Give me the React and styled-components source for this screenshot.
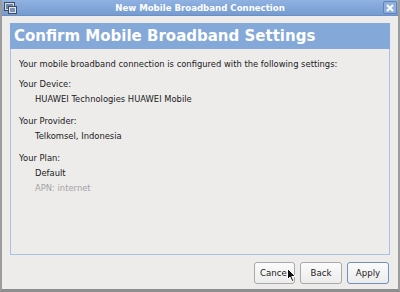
import React from 'react';
import styled, { createGlobalStyle } from 'styled-components';

const Global = createGlobalStyle`
  html, body {
    margin: 0;
    padding: 0;
    background: #edeceb;
  }
  * { box-sizing: border-box; }
`

const Window = styled.div`
  width: 400px;
  height: 292px;
  display: flex;
  flex-direction: column;
  background: #edeceb;
  border-left: 2px solid #9c9c9c;
  border-right: 2px solid #9c9c9c;
  border-bottom: 3px solid #8e8e8e;
  font-family: "DejaVu Sans", sans-serif;
  color: #1a1a1a;
  position: relative;
  overflow: hidden;
`
const TitleBar = styled.div`
  height: 16px;
  margin: 0 -2px;
  display: flex;
  align-items: center;
  padding: 0 3px 0 4px;
  background: linear-gradient(#90b2e2, #759bd0);
  border-bottom: 1px solid #6a8fc4;
`
const TitleText = styled.div`
  flex: 1;
  text-align: center;
  color: #fff;
  font-weight: bold;
  font-size: 8.6px;
`
const CloseBtn = styled.div`
  width: 14px;
  height: 13px;
  border: 1px solid #5f82b6;
  border-radius: 2px;
  background: #8fb0dc;
  display: flex;
  align-items: center;
  justify-content: center;
`
const Content = styled.div`
  flex: 1;
  display: flex;
  flex-direction: column;
  padding: 7px 8px 0 8px;
`
const Header = styled.div`
  height: 26px;
  background: #84a8d8;
  color: #fff;
  font-weight: bold;
  font-size: 15px;
  display: flex;
  align-items: center;
  padding-left: 4px;
`
const Body = styled.div`
  height: 206px;
  border: 1px solid #a9c1e2;
  border-top: none;
  padding: 8px 8px;
  font-size: 8.4px;
`
const Line = styled.div`
  height: 15px;
  line-height: 15px;
  padding-left: ${p => (p.$indent ? '16px' : '0')};
  color: ${p => (p.$muted ? '#a3a3a3' : '#1a1a1a')};
  margin-top: ${p => p.$gap || 0}px;
`
const Buttons = styled.div`
  display: flex;
  justify-content: flex-end;
  gap: 5px;
  padding: 7px 1px 0 0;
`
const Button = styled.div`
  width: ${p => p.$w}px;
  height: 22px;
  border: 1px solid ${p => (p.$default ? '#7391be' : '#a9a9a9')};
  border-radius: 3px;
  background: linear-gradient(#fbfbfb, #ececec);
  font-size: 8.6px;
  display: flex;
  align-items: center;
  justify-content: center;
  color: #1a1a1a;
`
const Cursor = styled.svg`
  position: absolute;
  left: 285px;
  top: 268px;
`

export default function App() {
  return (
    <>
      <Global />
      <Window>
        <TitleBar>
          <svg width="13" height="12" viewBox="0 0 13 12">
            <rect x="0.5" y="0.5" width="10" height="8" fill="#d8dde6" stroke="#3f4b5e" />
            <rect x="2" y="2" width="7" height="5" fill="#6f86a8" />
            <rect x="4.5" y="4.5" width="8" height="7" fill="#e0e4ea" stroke="#3f4b5e" />
            <rect x="6" y="6" width="5" height="4" fill="#7d93b4" />
          </svg>
          <TitleText>New Mobile Broadband Connection</TitleText>
          <CloseBtn>
            <svg width="8" height="8" viewBox="0 0 8 8">
              <path d="M1 1L7 7M7 1L1 7" stroke="#fff" strokeWidth="2" />
            </svg>
          </CloseBtn>
        </TitleBar>
        <Content>
          <Header>Confirm Mobile Broadband Settings</Header>
          <Body>
            <Line>Your mobile broadband connection is configured with the following settings:</Line>
            <Line $gap={5}>Your Device:</Line>
            <Line $indent>HUAWEI Technologies HUAWEI Mobile</Line>
            <Line $gap={7}>Your Provider:</Line>
            <Line $indent>Telkomsel, Indonesia</Line>
            <Line $gap={7}>Your Plan:</Line>
            <Line $indent>Default</Line>
            <Line $indent $muted>APN: internet</Line>
          </Body>
          <Buttons>
            <Button $w={41}>Cancel</Button>
            <Button $w={42}>Back</Button>
            <Button $w={42} $default>Apply</Button>
          </Buttons>
        </Content>
        <Cursor width="10" height="15" viewBox="0 0 10 15">
          <path d="M0.5 0.5L0.5 11.5L3 9L5 13.5L6.8 12.7L4.8 8.5L8.5 8.5Z" fill="#111" stroke="#fff" strokeWidth="1" />
        </Cursor>
      </Window>
    </>
  );
}
